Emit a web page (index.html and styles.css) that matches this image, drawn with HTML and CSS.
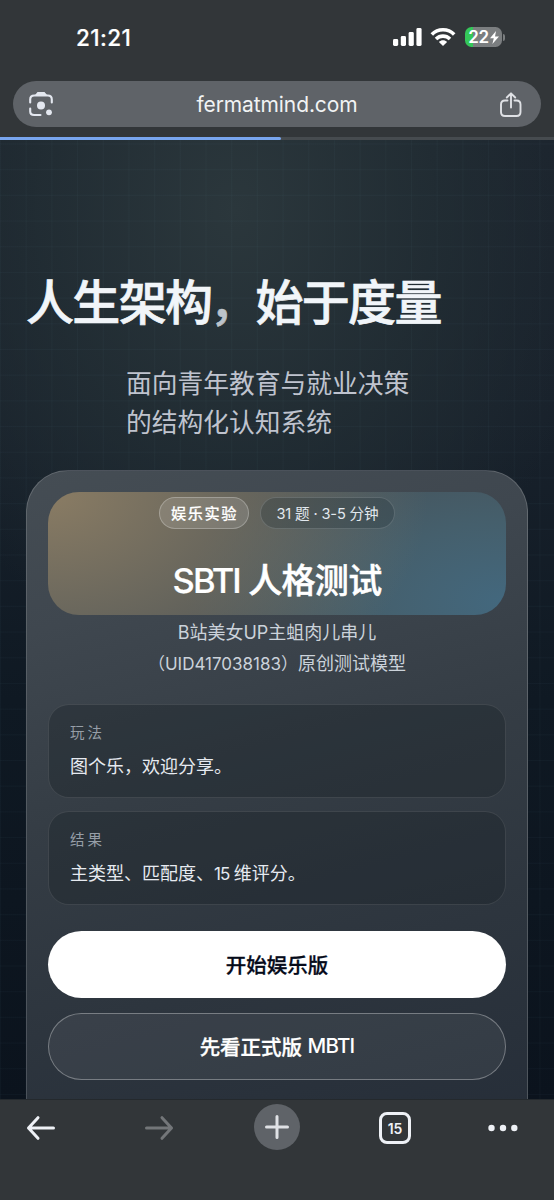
FILE: index.html
```
<!DOCTYPE html>
<html lang="zh-CN">
<head>
<meta charset="utf-8">
<title>fermatmind.com</title>
<link rel="stylesheet" href="styles.css">
</head>
<body>
<div class="phone">
  <header class="chrome-top">
    <div class="status">
      <span class="time">21:21</span>
      <div class="status-icons">
        <svg class="signal" width="30" height="20" viewBox="0 0 30 20" fill="#fff"><rect x="0" y="12" width="5.2" height="7" rx="1.4"/><rect x="7.8" y="9" width="5.2" height="10" rx="1.4"/><rect x="15.6" y="5" width="5.2" height="14" rx="1.4"/><rect x="23.4" y="1" width="5.2" height="18" rx="1.4"/></svg>
        <svg class="wifi" width="26" height="20" viewBox="0 0 26 20" fill="none" stroke="#fff" stroke-width="3.6"><path d="M1.8 7.5C8 1.2 18 1.2 24.2 7.5"/><path d="M6 12C10 8.2 16 8.2 20 12"/><path d="M8.9 14.9C11.2 12.8 14.8 12.8 17.1 14.9L13 19Z" fill="#fff" stroke="none"/></svg>
        <div class="battery"><span>22</span><svg width="9" height="13" viewBox="0 0 9 13"><path d="M6 0L0 7.3H3.8L2.4 13L9 5.4H5Z" fill="#fff"/></svg></div>
        <i class="battery-cap"></i>
      </div>
    </div>
    <div class="address">
      <svg width="28" height="28" viewBox="0 0 28 28" fill="none" stroke="#e4e8f0" stroke-width="2.1" stroke-linecap="round"><path d="M3.2 12.5V9.5Q3.2 5.5 7.2 5.5H20.8Q24.8 5.5 24.8 9.5V12.5M3.2 18.5V21.5Q3.2 25 7.2 25H13.5"/><path d="M9.5 4.8L11 3H17L18.5 4.8Z" fill="#e4e8f0"/><circle cx="14" cy="15.6" r="4" fill="#e4e8f0" stroke="none"/><circle cx="22" cy="22.3" r="2.9" fill="#e4e8f0" stroke="none"/></svg>
      <span class="host">fermatmind.com</span>
      <svg width="24" height="28" viewBox="0 0 24 28" fill="none" stroke="#dfe1e5" stroke-width="1.9" stroke-linecap="round" stroke-linejoin="round"><path d="M8.5 10.500H6Q2 10.500 2 14.500V22Q2 26 6 26H17.500Q21.500 26 21.500 22V14.500Q21.500 10.500 17.500 10.500H15.500M12 17.500V3.800M7.800 7.500L12 3.300L16.200 7.500"/></svg>
    </div>
    <div class="progress"><i></i></div>
  </header>

  <main class="page">
    <h1>人生架构<span class="comma">，</span>始于度量</h1>
    <p class="lead">面向青年教育与就业决策<br>的结构化认知系统</p>
    <section class="card">
      <div class="banner">
        <div class="tags"><span class="tag tag-main">娱乐实验</span><span class="tag tag-info">31 题 · 3-5 分钟</span></div>
        <h2><span class="latin">SBTI</span> 人格测试</h2>
      </div>
      <p class="credit">B站美女UP主蛆肉儿串儿<br><span class="uid">（UID417038183）</span>原创测试模型</p>
      <div class="note"><span class="note-label">玩法</span><span class="note-text">图个乐，欢迎分享。</span></div>
      <div class="note"><span class="note-label">结果</span><span class="note-text">主类型、匹配度、<span class="count">15 </span>维评分。</span></div>
      <a class="button primary">开始娱乐版</a>
      <a class="button secondary">先看正式版 <span class="mbti">MBTI</span></a>
    </section>
  </main>

  <nav class="chrome-bottom">
    <svg width="32" height="28" viewBox="0 0 32 28" fill="none" stroke="#eef1f6" stroke-width="3" stroke-linecap="round" stroke-linejoin="round"><path d="M28.500 14H3.500M13 3.700L3.500 14L13 24.300"/></svg>
    <svg class="forward" width="32" height="28" viewBox="0 0 32 28" fill="none" stroke="#737679" stroke-width="3" stroke-linecap="round" stroke-linejoin="round"><path d="M3.500 14H28.500M19 3.700L28.500 14L19 24.300"/></svg>
    <span class="plus"><svg width="26" height="26" viewBox="0 0 26 26" stroke="#dfe1e5" stroke-width="3" stroke-linecap="round"><path d="M13 2.500V23.500M2.500 13H23.500"/></svg></span>
    <span class="tabs">15</span>
    <svg class="more" width="32" height="28" viewBox="0 0 32 28" fill="#eef1f6"><circle cx="4.500" cy="14" r="3.200"/><circle cx="16" cy="14" r="3.200"/><circle cx="27.300" cy="14" r="3.200"/></svg>
  </nav>
</div>
</body>
</html>
```
FILE: styles.css
```
* { box-sizing: border-box; }
body { margin: 0; font-family: Inter, "Noto Sans CJK SC", sans-serif; background: #323639; }
h1, h2, p { margin: 0; }
svg { display: block; flex: none; }
.phone { width: 554px; height: 1200px; display: flex; flex-direction: column; overflow: hidden; }

.chrome-top { height: 140px; flex: none; background: #323639; display: flex; flex-direction: column; }
.status { height: 81px; flex: none; padding: 24px 49px 0 76px; display: flex; justify-content: space-between; align-items: flex-start; }
.time { color: #fff; font-size: 22.5px; line-height: 28px; font-weight: 500; letter-spacing: 0.4px; -webkit-text-stroke: 0.2px #fff; }
.status-icons { display: flex; align-items: center; padding-top: 3px; }
.wifi { margin-left: 7px; }
.battery { margin-left: 9px; width: 37px; height: 20px; border-radius: 6.5px; background: linear-gradient(90deg, #34c759 0 8px, #7b7e80 8px); display: flex; align-items: center; justify-content: center; gap: 1px; color: #fff; font-weight: 600; font-size: 17px; line-height: 20px; letter-spacing: -0.4px; }
.battery-cap { width: 2px; height: 7px; margin-left: 1px; border-radius: 0 2px 2px 0; background: #7b7e80; }
.address { height: 46px; flex: none; margin: 0 13px; padding: 0 18px 0 14px; border-radius: 23px; background: #5f6368; display: flex; align-items: center; justify-content: space-between; }
.host { font-size: 21px; line-height: 28px; color: #f1f3f4; letter-spacing: -0.1px; padding-top: 1px; }
.progress { height: 3px; flex: none; margin-top: 10px; background: #464b4f; }
.progress i { display: block; width: 281px; height: 3px; background: #78a5ee; border-radius: 0 2px 2px 0; }

.page {
  height: 959px; flex: none; padding: 130px 26px 0; overflow: hidden;
  background:
    linear-gradient(90deg, rgba(120, 170, 185, .04) 1px, transparent 1px) 0 0 / 25.7px 25.7px,
    linear-gradient(rgba(120, 170, 185, .04) 1px, transparent 1px) 0 3.5px / 25.7px 25.7px,
    radial-gradient(ellipse 370px 460px at 235px 70px, rgba(43, 55, 60, 1), rgba(35, 47, 53, .75) 55%, rgba(20, 30, 40, 0)),
    linear-gradient(180deg, #1b232d 0, #18212b 280px, #0f1923 560px, #0b131d 959px);
}
h1 { font-size: 48px; line-height: 66px; font-weight: 500; -webkit-text-stroke: 0.7px; letter-spacing: -1.65px; color: #f1f5f9; white-space: nowrap; }
.comma { color: #bcc3ca; margin-left: -2px; letter-spacing: -2px; }
.lead { margin: 29px 0 0 100px; font-size: 25.75px; line-height: 38.5px; color: #bfc3ce; font-weight: 400; white-space: nowrap; }
.card { margin-top: 28px; width: 502px; height: 680px; padding: 21px 21px 0; border: 1px solid rgba(255, 255, 255, .17); border-radius: 42px; background: linear-gradient(165deg, #454d54 0, #3f474f 20%, #353d45 44%, #2d353e 70%, #252d38 100%); }
.banner { height: 123px; border-radius: 31px; padding-top: 5px; text-align: center; background: radial-gradient(ellipse 380px 260px at 0 0, rgba(144, 128, 101, .92), rgba(138, 125, 100, .5) 50%, transparent), radial-gradient(ellipse 320px 180px at 100% 90%, #43687e, #455f6c 45%, transparent), #464f55; }
.tags { display: flex; justify-content: center; gap: 11px; }
.tag { height: 32px; border: 1px solid; border-radius: 16px; display: flex; align-items: center; justify-content: center; line-height: 30px; white-space: nowrap; }
.tag-main { width: 90px; font-size: 15.2px; color: #fff; font-weight: 500; -webkit-text-stroke: 0.2px; letter-spacing: 1.6px; padding: 2px 0 0 1px; border-color: rgba(255, 255, 255, .25); background: rgba(255, 255, 255, .13); }
.tag-info { width: 135px; font-size: 14.6px; letter-spacing: -0.15px; padding-top: 2px; color: #e2e8ee; border-color: rgba(255, 255, 255, .15); background: rgba(28, 42, 50, .25); }
h2 { color: #fff; font-size: 34px; line-height: 44px; font-weight: 500; -webkit-text-stroke: 0.5px; letter-spacing: -0.7px; margin-top: 30px; white-space: nowrap; }
.latin { font-size: 34.5px; letter-spacing: -1.9px; -webkit-text-stroke: 0.2px; }
.credit { margin-top: 2px; text-align: center; font-size: 18px; line-height: 31px; color: #cbd2da; white-space: nowrap; }
.uid { font-size: 17px; }
.note { height: 94px; margin-bottom: 13px; padding: 17px 21px 0; border: 1px solid rgba(255, 255, 255, .1); border-radius: 21px; background: rgba(25, 34, 40, .36); display: flex; flex-direction: column; }
.credit + .note { margin-top: 24px; }
.note-label { font-size: 14.5px; line-height: 22px; letter-spacing: 3px; color: #969ea7; }
.note-text { margin-top: 8px; font-size: 18px; line-height: 30px; color: #e6eaf0; white-space: nowrap; }
.count { font-size: 17px; letter-spacing: -0.8px; }
.button { height: 67px; padding-bottom: 2px; border-radius: 34px; display: flex; align-items: center; justify-content: center; font-size: 20.5px; font-weight: 500; -webkit-text-stroke: 0.3px; white-space: pre; }
.primary { margin-top: 26px; background: #fff; color: #050a19; }
.secondary { margin-top: 15px; border: 1px solid rgba(255, 255, 255, .32); background: rgba(255, 255, 255, .06); color: #fff; }
.mbti { letter-spacing: -0.8px; -webkit-text-stroke: 0; }

.chrome-bottom { height: 101px; flex: none; background: #323639; padding-left: 25px; display: flex; align-items: flex-start; border-top: 1px solid #24292d; }
.chrome-bottom > svg { margin-top: 14px; }
.chrome-bottom .forward { margin-left: 86px; }
.plus { width: 46px; height: 46px; margin: 4px 0 0 79px; border-radius: 50%; background: #5f6368; display: flex; align-items: center; justify-content: center; }
.tabs { width: 32px; height: 32px; margin: 12px 0 0 79px; border: 3px solid #eef1f6; border-radius: 8px; color: #eef1f6; font-size: 14px; font-weight: 600; display: flex; align-items: center; justify-content: center; }
.chrome-bottom .more { margin-left: 76px; }
```
